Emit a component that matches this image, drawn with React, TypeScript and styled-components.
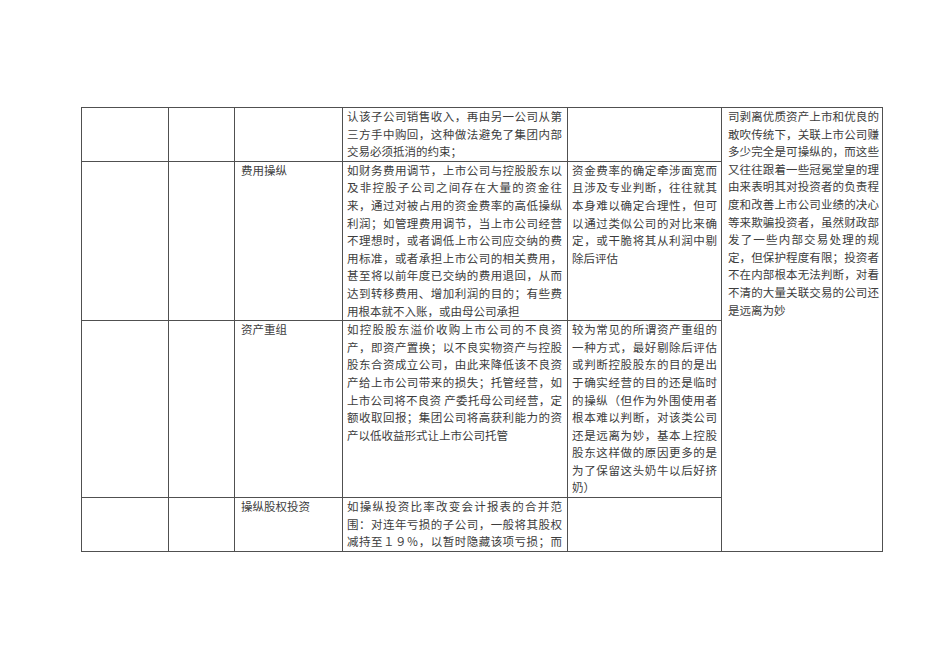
import React from "react";
import styled, { createGlobalStyle } from "styled-components";

const Global = createGlobalStyle`
  html, body { margin: 0; padding: 0; background: #ffffff; }
  body { font-family: "Noto Sans CJK SC", "Noto Sans", sans-serif; }
`;

const Page = styled.div`
  padding: 107px 0 0 81px;
  min-height: 672px;
  box-sizing: border-box;
`;

const Table = styled.table`
  border-collapse: collapse;
  table-layout: fixed;
  width: 801px;
  color: #3d3d3d;
  font-family: "Noto Sans CJK SC", sans-serif;
  font-size: 11.5px;
  line-height: 17.6px;
`;

const Cell = styled.td<{ $pl?: number; $pr?: number }>`
  border: 1px solid #505050;
  vertical-align: top;
  padding: 0 ${(p) => p.$pr ?? 5}px 0 ${(p) => p.$pl ?? 5}px;
  overflow: hidden;
`;

const Label = styled.div`
  padding-left: 1px;
  white-space: nowrap;
`;

const Line = styled.span<{ $last?: boolean }>`
  display: block;
  text-align: ${(p) => (p.$last ? "left" : "justify")};
  text-align-last: ${(p) => (p.$last ? "left" : "justify")};
`;

const Para: React.FC<{ lines: string[]; openEnd?: boolean }> = ({ lines, openEnd }) => (
  <>
    {lines.map((l, i) => (
      <Line key={i} $last={!openEnd && i === lines.length - 1}>
        {l}
      </Line>
    ))}
  </>
);

const r1c4 = [
  "认该子公司销售收入，再由另一公司从第",
  "三方手中购回，这种做法避免了集团内部",
  "交易必须抵消的约束；",
];

const r2c4 = [
  "如财务费用调节，上市公司与控股股东以",
  "及非控股子公司之间存在大量的资金往",
  "来，通过对被占用的资金费率的高低操纵",
  "利润；如管理费用调节，当上市公司经营",
  "不理想时，或者调低上市公司应交纳的费",
  "用标准，或者承担上市公司的相关费用，",
  "甚至将以前年度已交纳的费用退回，从而",
  "达到转移费用、增加利润的目的；有些费",
  "用根本就不入账，或由母公司承担",
];

const r2c5 = [
  "资金费率的确定牵涉面宽而",
  "且涉及专业判断，往往就其",
  "本身难以确定合理性，但可",
  "以通过类似公司的对比来确",
  "定，或干脆将其从利润中剔",
  "除后评估",
];

const r3c4 = [
  "如控股股东溢价收购上市公司的不良资",
  "产，即资产置换；以不良实物资产与控股",
  "股东合资成立公司，由此来降低该不良资",
  "产给上市公司带来的损失；托管经营，如",
  "上市公司将不良资 产委托母公司经营，定",
  "额收取回报；集团公司将高获利能力的资",
  "产以低收益形式让上市公司托管",
];

const r3c5 = [
  "较为常见的所谓资产重组的",
  "一种方式，最好剔除后评估",
  "或判断控股股东的目的是出",
  "于确实经营的目的还是临时",
  "的操纵（但作为外围使用者",
  "根本难以判断，对该类公司",
  "还是远离为妙，基本上控股",
  "股东这样做的原因更多的是",
  "为了保留这头奶牛以后好挤",
  "奶）",
];

const r4c4 = [
  "如操纵投资比率改变会计报表的合并范",
  "围：对连年亏损的子公司，一般将其股权",
  "减持至１９％，以暂时隐藏该项亏损；而",
];

const c6 = [
  "司剥离优质资产上市和优良的",
  "敢吹传统下，关联上市公司赚",
  "多少完全是可操纵的，而这些",
  "又往往跟着一些冠冕堂皇的理",
  "由来表明其对投资者的负责程",
  "度和改善上市公司业绩的决心",
  "等来欺骗投资者，虽然财政部",
  "发了一些内部交易处理的规",
  "定，但保护程度有限；投资者",
  "不在内部根本无法判断，对看",
  "不清的大量关联交易的公司还",
  "是远离为妙",
];

export default function App() {
  return (
    <>
      <Global />
      <Page>
        <Table>
          <colgroup>
            <col style={{ width: 87 }} />
            <col style={{ width: 66 }} />
            <col style={{ width: 108 }} />
            <col style={{ width: 225 }} />
            <col style={{ width: 154 }} />
            <col style={{ width: 161 }} />
          </colgroup>
          <tbody>
            <tr>
              <Cell />
              <Cell />
              <Cell />
              <Cell $pl={4} $pr={5}>
                <Para lines={r1c4} />
              </Cell>
              <Cell />
              <Cell rowSpan={4} $pl={6} $pr={3}>
                <Para lines={c6} />
              </Cell>
            </tr>
            <tr>
              <Cell />
              <Cell />
              <Cell $pl={5}>
                <Label>费用操纵</Label>
              </Cell>
              <Cell $pl={4} $pr={5}>
                <Para lines={r2c4} />
              </Cell>
              <Cell $pl={4} $pr={4}>
                <Para lines={r2c5} />
              </Cell>
            </tr>
            <tr>
              <Cell />
              <Cell />
              <Cell $pl={5}>
                <Label>资产重组</Label>
              </Cell>
              <Cell $pl={4} $pr={5}>
                <Para lines={r3c4} />
              </Cell>
              <Cell $pl={4} $pr={4}>
                <Para lines={r3c5} />
              </Cell>
            </tr>
            <tr>
              <Cell />
              <Cell />
              <Cell $pl={5}>
                <Label>操纵股权投资</Label>
              </Cell>
              <Cell $pl={4} $pr={5}>
                <Para lines={r4c4} openEnd />
              </Cell>
              <Cell />
            </tr>
          </tbody>
        </Table>
      </Page>
    </>
  );
}
